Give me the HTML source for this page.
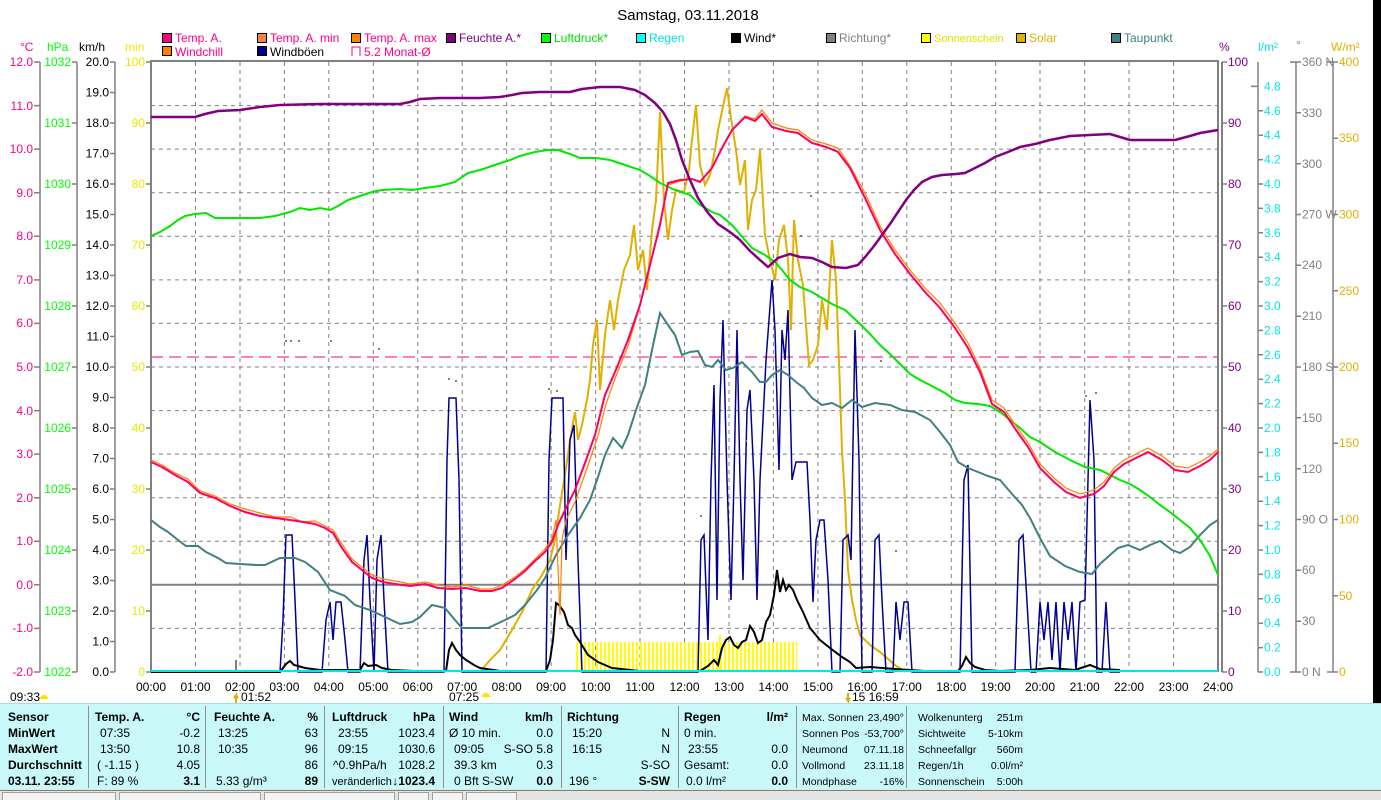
<!DOCTYPE html>
<html><head><meta charset="utf-8"><style>
body{margin:0;width:1381px;height:800px;overflow:hidden;background:#fff;font-family:"Liberation Sans",sans-serif}
svg{display:block;font-size:12px;font-family:"Liberation Sans",sans-serif}
.b{font-weight:bold}
</style></head><body>
<svg width="1381" height="800" viewBox="0 0 1381 800">
<defs>
<pattern id="sun" width="4" height="30" patternUnits="userSpaceOnUse"><rect width="2" height="30" fill="#ffff00"/></pattern>
</defs>
<rect x="1373" y="0" width="8" height="703" fill="#000"/>
<text x="688" y="20" text-anchor="middle" style="font-size:15px">Samstag, 03.11.2018</text>
<g stroke="#000" stroke-width="1">
<rect x="162.5" y="33.5" width="9" height="9" fill="#ff0080"/>
<rect x="257.5" y="33.5" width="9" height="9" fill="#ff8040"/>
<rect x="351.5" y="33.5" width="9" height="9" fill="#ff8000"/>
<rect x="446.5" y="33.5" width="9" height="9" fill="#800080"/>
<rect x="541.5" y="33.5" width="9" height="9" fill="#00ff00"/>
<rect x="636.5" y="33.5" width="9" height="9" fill="#00ffff"/>
<rect x="731.5" y="33.5" width="9" height="9" fill="#000"/>
<rect x="826.5" y="33.5" width="9" height="9" fill="#808080"/>
<rect x="921.5" y="33.5" width="9" height="9" fill="#ffff00"/>
<rect x="1016.5" y="33.5" width="9" height="9" fill="#e0b000"/>
<rect x="1111.5" y="33.5" width="9" height="9" fill="#408080"/>
<rect x="162.5" y="46.5" width="9" height="9" fill="#ff8000"/>
<rect x="257.5" y="46.5" width="9" height="9" fill="#000090"/>
</g>
<path d="M352 56V47h8v9" fill="none" stroke="#ff0080"/>
<g style="font-size:12px">
<text x="175" y="42" fill="#ff0080">Temp. A.</text>
<text x="270" y="42" fill="#ff0080">Temp. A. min</text>
<text x="364" y="42" fill="#ff0080">Temp. A. max</text>
<text x="459" y="42" fill="#800080">Feuchte A.*</text>
<text x="554" y="42" fill="#00e000">Luftdruck*</text>
<text x="649" y="42" fill="#00e0e0">Regen</text>
<text x="744" y="42" fill="#000">Wind*</text>
<text x="839" y="42" fill="#808080">Richtung*</text>
<text x="934" y="42" fill="#e0e000" style="font-size:11px">Sonnenschein</text>
<text x="1029" y="42" fill="#e0b000">Solar</text>
<text x="1124" y="42" fill="#408080">Taupunkt</text>
<text x="175" y="56" fill="#ff0080">Windchill</text>
<text x="270" y="56" fill="#000">Windböen</text>
<text x="364" y="56" fill="#ff0080">5.2 Monat-Ø</text>
<text x="20" y="51" fill="#ff0080">°C</text>
<text x="47" y="51" fill="#00ff00">hPa</text>
<text x="79" y="51" fill="#000">km/h</text>
<text x="125" y="51" fill="#e8e800">min</text>
<text x="1219" y="51" fill="#800080">%</text>
<text x="1258" y="51" fill="#00e0e0">l/m²</text>
<text x="1296" y="49" fill="#808080">°</text>
<text x="1331" y="51" fill="#e0b000">W/m²</text>
</g>
<g stroke="#808080" stroke-dasharray="4,4" stroke-width="1">
<path d="M195.5 62V672M240 62V672M284.4 62V672M328.8 62V672M373.3 62V672M417.8 62V672M462.2 62V672M506.7 62V672M551.1 62V672M595.6 62V672M640 62V672M684.5 62V672M729 62V672M773.4 62V672M817.9 62V672M862.3 62V672M906.8 62V672M951.3 62V672M995.7 62V672M1040 62V672M1084.7 62V672M1129 62V672M1173.6 62V672"/>
<path d="M151 105.6H1218M151 149.1H1218M151 192.7H1218M151 236.3H1218M151 279.9H1218M151 323.4H1218M151 367H1218M151 410.6H1218M151 454.1H1218M151 497.7H1218M151 541.3H1218M151 628.4H1218"/>
</g>
<path d="M151 584.8H1218" stroke="#808080" stroke-width="2"/>
<path d="M151 357H1218" stroke="#ff0080" stroke-dasharray="12,6"/>
<g stroke="#808080" stroke-width="2" fill="none">
<path d="M151 672V61H1218V672"/>
<path d="M1222 62V672"/>
</g>
<g stroke="#808080" stroke-width="1.5" fill="none">
<path d="M40 62V672M77 62V672M115 62V672M1258 62V672M1296 62V672M1333 62V672"/>
<path d="M34 62h6M34 105.6h6M34 149.1h6M34 192.7h6M34 236.3h6M34 279.9h6M34 323.4h6M34 367h6M34 410.6h6M34 454.1h6M34 497.7h6M34 541.3h6M34 584.8h6M34 628.4h6M34 672h6"/>
<path d="M72 62h5M72 123h5M72 184h5M72 245h5M72 306h5M72 367h5M72 428h5M72 489h5M72 550h5M72 611h5M72 672h5"/>
<path d="M110 62h5M110 92.5h5M110 123h5M110 153.5h5M110 184h5M110 214.5h5M110 245h5M110 275.5h5M110 306h5M110 336.5h5M110 367h5M110 397.5h5M110 428h5M110 458.5h5M110 489h5M110 519.5h5M110 550h5M110 580.5h5M110 611h5M110 641.5h5M110 672h5"/>
<path d="M146 62h5M146 123h5M146 184h5M146 245h5M146 306h5M146 367h5M146 428h5M146 489h5M146 550h5M146 611h5M146 672h5"/>
<path d="M1222 62h5M1222 123h5M1222 184h5M1222 245h5M1222 306h5M1222 367h5M1222 428h5M1222 489h5M1222 550h5M1222 611h5M1222 672h5"/>
<path d="M1251 86.4h7M1258 110.8h5M1258 135.2h5M1258 159.6h5M1258 184h5M1258 208.4h5M1258 232.8h5M1258 257.2h5M1258 281.6h5M1258 306h5M1258 330.4h5M1258 354.8h5M1258 379.2h5M1258 403.6h5M1258 428h5M1258 452.4h5M1258 476.8h5M1258 501.2h5M1258 525.6h5M1258 550h5M1258 574.4h5M1258 598.8h5M1258 623.2h5M1258 647.6h5M1258 672h5"/>
<path d="M1290 62h11M1296 112.8h5M1296 163.7h5M1296 214.5h5M1296 265.3h5M1296 316.2h5M1296 367h5M1296 417.8h5M1296 468.7h5M1296 519.5h5M1296 570.3h5M1296 621.2h5M1290 672h11"/>
<path d="M1327 62h11M1333 138.25h5M1333 214.5h5M1333 290.75h5M1333 367h5M1333 443.25h5M1333 519.5h5M1333 595.75h5M1327 672h11"/>
</g>
<g fill="#ff0080" text-anchor="end">
<text x="33" y="66">12.0</text><text x="33" y="110">11.0</text><text x="33" y="153">10.0</text><text x="33" y="197">9.0</text><text x="33" y="240">8.0</text><text x="33" y="284">7.0</text><text x="33" y="327">6.0</text><text x="33" y="371">5.0</text><text x="33" y="415">4.0</text><text x="33" y="458">3.0</text><text x="33" y="502">2.0</text><text x="33" y="545">1.0</text><text x="33" y="589">0.0</text><text x="33" y="632">-1.0</text><text x="33" y="676">-2.0</text>
</g>
<g fill="#00ff00" text-anchor="end">
<text x="71" y="66">1032</text><text x="71" y="127">1031</text><text x="71" y="188">1030</text><text x="71" y="249">1029</text><text x="71" y="310">1028</text><text x="71" y="371">1027</text><text x="71" y="432">1026</text><text x="71" y="493">1025</text><text x="71" y="554">1024</text><text x="71" y="615">1023</text><text x="71" y="676">1022</text>
</g>
<g fill="#000" text-anchor="end">
<text x="109" y="66">20.0</text><text x="109" y="96.5">19.0</text><text x="109" y="127">18.0</text><text x="109" y="157.5">17.0</text><text x="109" y="188">16.0</text><text x="109" y="218.5">15.0</text><text x="109" y="249">14.0</text><text x="109" y="279.5">13.0</text><text x="109" y="310">12.0</text><text x="109" y="340.5">11.0</text><text x="109" y="371">10.0</text><text x="109" y="401.5">9.0</text><text x="109" y="432">8.0</text><text x="109" y="462.5">7.0</text><text x="109" y="493">6.0</text><text x="109" y="523.5">5.0</text><text x="109" y="554">4.0</text><text x="109" y="584.5">3.0</text><text x="109" y="615">2.0</text><text x="109" y="645.5">1.0</text><text x="109" y="676">0.0</text>
</g>
<g fill="#e8e800" text-anchor="end">
<text x="145" y="66">100</text><text x="145" y="127">90</text><text x="145" y="188">80</text><text x="145" y="249">70</text><text x="145" y="310">60</text><text x="145" y="371">50</text><text x="145" y="432">40</text><text x="145" y="493">30</text><text x="145" y="554">20</text><text x="145" y="615">10</text><text x="145" y="676">0</text>
</g>
<g fill="#800080">
<text x="1228" y="66">100</text><text x="1228" y="127">90</text><text x="1228" y="188">80</text><text x="1228" y="249">70</text><text x="1228" y="310">60</text><text x="1228" y="371">50</text><text x="1228" y="432">40</text><text x="1228" y="493">30</text><text x="1228" y="554">20</text><text x="1228" y="615">10</text><text x="1228" y="676">0</text>
</g>
<g fill="#00e8e8">
<text x="1264" y="90.4">4.8</text><text x="1264" y="114.8">4.6</text><text x="1264" y="139.2">4.4</text><text x="1264" y="163.6">4.2</text><text x="1264" y="188">4.0</text><text x="1264" y="212.4">3.8</text><text x="1264" y="236.8">3.6</text><text x="1264" y="261.2">3.4</text><text x="1264" y="285.6">3.2</text><text x="1264" y="310">3.0</text><text x="1264" y="334.4">2.8</text><text x="1264" y="358.8">2.6</text><text x="1264" y="383.2">2.4</text><text x="1264" y="407.6">2.2</text><text x="1264" y="432">2.0</text><text x="1264" y="456.4">1.8</text><text x="1264" y="480.8">1.6</text><text x="1264" y="505.2">1.4</text><text x="1264" y="529.6">1.2</text><text x="1264" y="554">1.0</text><text x="1264" y="578.4">0.8</text><text x="1264" y="602.8">0.6</text><text x="1264" y="627.2">0.4</text><text x="1264" y="651.6">0.2</text><text x="1264" y="676">0.0</text>
</g>
<g fill="#808080">
<text x="1302" y="66">360 N</text><text x="1302" y="117">330</text><text x="1302" y="168">300</text><text x="1302" y="218.5">270 W</text><text x="1302" y="269">240</text><text x="1302" y="320">210</text><text x="1302" y="371">180 S</text><text x="1302" y="422">150</text><text x="1302" y="473">120</text><text x="1302" y="523.5">90 O</text><text x="1302" y="574">60</text><text x="1302" y="625">30</text><text x="1302" y="676">0 N</text>
</g>
<g fill="#e0b000">
<text x="1339" y="66">400</text><text x="1339" y="142">350</text><text x="1339" y="218.5">300</text><text x="1339" y="295">250</text><text x="1339" y="371">200</text><text x="1339" y="447">150</text><text x="1339" y="523.5">100</text><text x="1339" y="600">50</text><text x="1339" y="676">0</text>
</g>
<g text-anchor="middle" fill="#000">
<text x="151" y="691">00:00</text><text x="195.5" y="691">01:00</text><text x="240" y="691">02:00</text><text x="284.4" y="691">03:00</text><text x="328.8" y="691">04:00</text><text x="373.3" y="691">05:00</text><text x="417.8" y="691">06:00</text><text x="462.2" y="691">07:00</text><text x="506.7" y="691">08:00</text><text x="551.1" y="691">09:00</text><text x="595.6" y="691">10:00</text><text x="640" y="691">11:00</text><text x="684.5" y="691">12:00</text><text x="729" y="691">13:00</text><text x="773.4" y="691">14:00</text><text x="817.9" y="691">15:00</text><text x="862.3" y="691">16:00</text><text x="906.8" y="691">17:00</text><text x="951.3" y="691">18:00</text><text x="995.7" y="691">19:00</text><text x="1040" y="691">20:00</text><text x="1084.7" y="691">21:00</text><text x="1129" y="691">22:00</text><text x="1173.6" y="691">23:00</text><text x="1218" y="691">24:00</text>
</g>
<text x="10" y="701">09:33</text><path d="M40 699a4 4 0 0 1 8 0z" fill="#ffe000"/>
<text x="241" y="701">01:52</text><path d="M236 703v-8l-2 3m2-3l2 3" stroke="#e0b000" fill="none" stroke-width="2"/>
<text x="449" y="701">07:25</text><path d="M482 697a4 4 0 0 1 8 0z" fill="#ffe000"/>
<text x="852" y="701">15  16:59</text><path d="M848 693v8l-2-3m2 3l2-3" stroke="#e0b000" fill="none" stroke-width="2"/>
<path d="M236 660v12" stroke="#808080" stroke-width="2"/>
<rect x="575" y="642" width="222" height="30" fill="url(#sun)"/>
<rect x="719" y="635" width="2" height="37" fill="#ffff00"/>
<polyline fill="none" stroke="#e0b000" stroke-width="2" points="480,672 490,660 500,650 512,630 522,612 532,590 542,575 550,560 555,540 560,505 565,475 570,440 575,412 578,440 582,425 587,400 590,380 593,345 597,320 600,390 605,335 610,300 614,330 618,300 624,270 630,255 634,225 638,270 643,250 647,290 652,230 656,200 660,112 664,200 668,240 672,210 676,190 684,192 689,170 692,140 696,105 700,165 705,185 710,175 715,150 718,130 727,88 731,118 736,150 740,185 745,160 748,230 752,200 756,190 760,150 765,235 770,260 775,280 779,240 784,225 788,260 791,330 794,220 798,260 803,285 809,365 813,360 818,345 822,300 827,330 832,240 836,280 840,390 842,450 845,500 848,570 852,600 856,620 860,635 870,645 880,652 895,665 905,672"/>
<polyline fill="none" stroke="#000090" stroke-width="1.5" points="151,672 280,672 283,620 286,535 292,535 295,600 298,672 322,672 326,620 330,602 333,640 336,602 341,602 345,640 348,672 360,672 364,560 367,535 370,600 374,672 377,560 381,535 384,600 388,672 444,672 447,460 449,398 456,398 459,480 462,672 546,672 549,460 552,398 563,398 566,560 570,440 574,425 578,560 582,672 698,672 701,540 704,535 708,640 711,480 714,385 717,600 720,400 723,320 727,480 731,600 734,480 737,330 740,480 743,580 747,410 750,390 754,480 757,600 760,480 763,420 766,360 769,320 772,280 775,330 779,470 782,330 785,360 788,310 792,480 796,462 807,462 810,520 813,602 816,540 820,520 824,520 828,580 832,672 840,672 843,540 848,535 851,560 855,330 859,460 862,672 872,672 875,540 879,535 882,600 886,672 893,672 896,602 900,640 904,602 908,602 912,672 960,672 964,480 968,465 972,672 1015,672 1019,540 1023,535 1027,602 1031,672 1036,672 1040,602 1044,640 1048,602 1052,660 1056,602 1060,672 1064,602 1068,640 1072,602 1076,672 1080,602 1085,600 1090,400 1094,460 1097,672 1102,672 1106,602 1110,672 1120,672"/>
<polyline fill="none" stroke="#000" stroke-width="2" points="151,672 280,672 286,664 290,661 294,665 298,666 305,668 320,670 360,670 364,663 368,666 376,665 382,668 392,670 415,671 446,671 449,650 452,643 456,650 460,655 466,660 474,665 480,668 500,671 546,671 550,660 553,640 556,603 559,605 564,612 568,625 572,628 575,635 580,642 588,655 598,662 612,668 640,671 700,671 708,666 714,660 718,665 722,648 726,640 730,637 734,645 738,648 742,642 746,640 750,626 754,632 758,643 762,640 766,622 770,615 774,595 777,570 780,592 783,580 786,590 789,585 793,590 797,600 803,612 810,628 820,640 830,648 842,657 850,662 856,668 870,667 895,669 925,671 958,671 962,666 966,657 970,663 975,667 985,670 1000,671 1030,670 1050,668 1075,670 1090,665 1100,669 1120,670"/>
<polyline fill="none" stroke="#408080" stroke-width="2" points="151,520 160,527 168,532 178,540 186,546 198,546 206,552 218,558 226,563 240,564 256,565 265,565 280,558 295,558 305,562 318,572 330,590 345,596 355,605 370,610 385,617 400,624 412,622 420,617 432,605 445,608 455,620 462,628 475,628 488,628 505,620 515,615 525,605 537,590 545,578 556,555 568,535 580,518 590,500 597,480 605,455 613,438 622,448 628,435 636,410 645,385 652,350 660,313 668,325 675,335 682,355 690,352 698,351 705,365 712,367 718,360 726,370 733,368 742,362 752,372 760,382 766,382 772,375 780,370 788,375 796,382 804,388 812,398 822,405 832,403 842,408 852,400 862,407 875,403 890,405 902,410 915,412 930,420 940,432 950,445 958,462 968,468 978,472 988,476 1000,480 1012,494 1022,505 1030,518 1040,538 1050,556 1065,566 1080,572 1092,574 1100,564 1110,555 1118,548 1128,545 1140,550 1150,545 1160,541 1172,550 1180,553 1190,547 1200,535 1210,525 1218,520"/>
<polyline fill="none" stroke="#00e800" stroke-width="2" points="151,236 160,232 170,226 178,220 185,216 195,214 206,213 215,218 230,218 245,218 260,218 275,216 290,212 300,208 310,210 320,208 330,210 338,206 348,200 360,196 372,192 382,190 400,189 412,190 425,188 440,186 455,182 468,173 480,170 495,165 510,160 520,156 535,152 548,150 558,150 570,154 580,158 596,158 610,160 625,165 640,170 650,176 660,183 675,190 690,195 700,205 712,212 720,215 732,225 745,240 752,248 765,255 775,262 782,270 790,280 800,287 812,292 822,298 832,304 845,310 858,322 870,334 880,345 890,354 900,364 910,374 920,380 930,385 945,393 955,400 965,403 978,404 990,406 1000,412 1010,420 1020,428 1030,437 1040,442 1055,452 1070,460 1085,467 1100,470 1110,475 1120,480 1130,484 1140,490 1150,497 1160,505 1170,512 1180,520 1190,528 1200,540 1210,556 1218,575"/>
<polyline fill="none" stroke="#ff8000" stroke-width="1.2" points="151,460 162,465 175,473 188,479 200,491 215,496 230,504 245,509 260,513 275,517 290,517 303,522 315,521 325,526 333,530 342,544 352,559 362,567 372,575 383,579 395,581 410,584 425,582 438,585 452,587 466,585 480,589 492,589 502,585 515,577 525,569 535,559 545,549 552,539 556,520 560,615 562,540 566,520 575,502 585,474 598,436 606,404 616,376 628,346 640,306 650,266 660,222 668,185 680,181 692,179 700,181 712,168 722,148 732,130 745,116 755,119 762,110 772,123 786,128 798,130 812,140 826,144 838,148 850,166 865,193 880,226 895,250 910,270 925,288 940,303 955,323 968,343 980,368 992,400 1004,408 1016,426 1028,443 1040,464 1054,478 1066,488 1080,494 1094,490 1104,482 1114,468 1124,460 1138,453 1148,448 1162,456 1175,466 1188,468 1200,462 1210,456 1218,449"/>
<polyline fill="none" stroke="#ff0060" stroke-width="2" points="151,462 162,467 175,475 188,482 200,493 215,498 230,506 245,512 260,516 275,518 290,520 303,522 315,524 325,528 333,533 342,548 352,562 362,570 372,578 383,582 395,584 410,586 425,584 438,588 452,589 466,588 480,591 492,591 502,588 515,579 525,571 535,561 545,552 552,542 558,525 566,508 575,490 585,463 595,435 605,395 615,372 628,340 640,305 650,265 660,225 668,183 680,180 692,179 700,182 712,168 722,148 732,130 745,117 755,121 762,114 772,127 786,131 798,133 812,143 826,147 838,152 850,168 865,198 880,230 895,254 910,274 925,292 940,308 955,328 968,348 980,372 992,404 1004,412 1016,430 1028,447 1040,468 1054,482 1066,492 1080,498 1094,494 1104,486 1114,472 1124,464 1138,457 1148,452 1162,460 1175,470 1188,472 1200,466 1210,460 1218,452"/>
<polyline fill="none" stroke="#800080" stroke-width="2.5" points="151,117 195,117 205,114 218,111 240,110 260,107 280,105 320,104 360,104 400,104 410,102 420,99 440,98 480,98 500,97 512,95 522,93 540,92 570,92 582,89 600,87 620,87 635,90 645,95 655,103 663,112 670,124 676,140 682,160 690,180 698,198 708,213 718,224 730,232 740,240 750,251 760,260 768,267 778,258 790,254 800,257 812,258 822,262 832,267 846,268 858,265 866,256 874,246 882,235 890,224 898,212 906,200 914,190 922,182 932,177 942,175 956,174 965,173 975,168 985,163 995,157 1008,152 1020,147 1035,144 1050,140 1070,136 1090,135 1110,134 1120,137 1130,140 1150,140 1175,140 1190,136 1200,133 1218,130"/>
<g fill="#808080">
<rect x="285" y="340" width="2" height="2"/><rect x="290" y="340" width="2" height="2"/><rect x="298" y="340" width="2" height="2"/><rect x="330" y="340" width="2" height="2"/><rect x="378" y="348" width="2" height="2"/><rect x="448" y="378" width="2" height="2"/><rect x="455" y="380" width="2" height="2"/><rect x="548" y="388" width="2" height="2"/><rect x="556" y="390" width="2" height="2"/><rect x="700" y="515" width="2" height="2"/><rect x="745" y="440" width="2" height="2"/><rect x="800" y="235" width="2" height="2"/><rect x="810" y="195" width="2" height="2"/><rect x="880" y="360" width="2" height="2"/><rect x="895" y="550" width="2" height="2"/><rect x="1085" y="395" width="2" height="2"/><rect x="1095" y="392" width="2" height="2"/>
</g>
<path d="M151 671H1218" stroke="#00e8e8" stroke-width="2"/>
<rect x="0" y="703" width="1381" height="86" fill="#c8f8f8"/>
<path d="M0 703.5H1381" stroke="#a0e0e0"/>
<g stroke="#909090" stroke-width="1">
<path d="M88.5 706V788M205.5 706V788M324.5 706V788M443.5 706V788M561.5 706V788M678.5 706V788M796.5 706V788M906.5 706V788"/>
</g>
<rect x="0" y="789" width="1381" height="11" fill="#e4e4e4"/>
<path d="M0 790.5H1381" stroke="#808080"/>
<g stroke="#a0a0a0" fill="#f4f4f4"><rect x="2.5" y="792.5" width="113" height="8"/><rect x="119.5" y="792.5" width="141" height="8"/><rect x="264.5" y="792.5" width="130" height="8"/><rect x="398.5" y="792.5" width="30" height="8"/><rect x="432.5" y="792.5" width="30" height="8"/><rect x="466.5" y="792.5" width="50" height="8"/></g>
<g style="font-size:12px">
<text x="8" y="721" class="b">Sensor</text>
<text x="8" y="737" class="b">MinWert</text>
<text x="8" y="753" class="b">MaxWert</text>
<text x="8" y="769" class="b">Durchschnitt</text>
<text x="8" y="785" class="b">03.11. 23:55</text>

<text x="95" y="721" class="b">Temp. A.</text><text x="200" y="721" class="b" text-anchor="end">°C</text>
<text x="100" y="737">07:35</text><text x="200" y="737" text-anchor="end">-0.2</text>
<text x="100" y="753">13:50</text><text x="200" y="753" text-anchor="end">10.8</text>
<text x="97" y="769">( -1.15 )</text><text x="200" y="769" text-anchor="end">4.05</text>
<text x="97" y="785">F: 89 %</text><text x="200" y="785" class="b" text-anchor="end">3.1</text>

<text x="214" y="721" class="b">Feuchte A.</text><text x="318" y="721" class="b" text-anchor="end">%</text>
<text x="218" y="737">13:25</text><text x="318" y="737" text-anchor="end">63</text>
<text x="218" y="753">10:35</text><text x="318" y="753" text-anchor="end">96</text>
<text x="318" y="769" text-anchor="end">86</text>
<text x="216" y="785">5.33 g/m³</text><text x="318" y="785" class="b" text-anchor="end">89</text>

<text x="332" y="721" class="b">Luftdruck</text><text x="435" y="721" class="b" text-anchor="end">hPa</text>
<text x="338" y="737">23:55</text><text x="435" y="737" text-anchor="end">1023.4</text>
<text x="338" y="753">09:15</text><text x="435" y="753" text-anchor="end">1030.6</text>
<text x="333" y="769">^0.9hPa/h</text><text x="435" y="769" text-anchor="end">1028.2</text>
<text x="332" y="785" style="font-size:11px">veränderlich</text><text x="435" y="785" class="b" text-anchor="end">↓1023.4</text>

<text x="449" y="721" class="b">Wind</text><text x="553" y="721" class="b" text-anchor="end">km/h</text>
<text x="449" y="737">Ø 10 min.</text><text x="553" y="737" text-anchor="end">0.0</text>
<text x="454" y="753">09:05</text><text x="553" y="753" text-anchor="end">S-SO 5.8</text>
<text x="454" y="769">39.3 km</text><text x="553" y="769" text-anchor="end">0.3</text>
<text x="454" y="785">0 Bft S-SW</text><text x="553" y="785" class="b" text-anchor="end">0.0</text>

<text x="567" y="721" class="b">Richtung</text>
<text x="572" y="737">15:20</text><text x="670" y="737" text-anchor="end">N</text>
<text x="572" y="753">16:15</text><text x="670" y="753" text-anchor="end">N</text>
<text x="670" y="769" text-anchor="end">S-SO</text>
<text x="569" y="785">196 °</text><text x="670" y="785" class="b" text-anchor="end">S-SW</text>

<text x="684" y="721" class="b">Regen</text><text x="788" y="721" class="b" text-anchor="end">l/m²</text>
<text x="684" y="737">0 min.</text>
<text x="688" y="753">23:55</text><text x="788" y="753" text-anchor="end">0.0</text>
<text x="684" y="769">Gesamt:</text><text x="788" y="769" text-anchor="end">0.0</text>
<text x="686" y="785">0.0 l/m²</text><text x="788" y="785" class="b" text-anchor="end">0.0</text>
</g>
<g style="font-size:10.5px">
<text x="802" y="721">Max. Sonnen</text><text x="904" y="721" text-anchor="end">23,490°</text>
<text x="802" y="737">Sonnen Pos</text><text x="904" y="737" text-anchor="end">-53,700°</text>
<text x="802" y="753">Neumond</text><text x="904" y="753" text-anchor="end">07.11.18</text>
<text x="802" y="769">Vollmond</text><text x="904" y="769" text-anchor="end">23.11.18</text>
<text x="802" y="785">Mondphase</text><text x="904" y="785" text-anchor="end">-16%</text>

<text x="918" y="721">Wolkenunterg</text><text x="1023" y="721" text-anchor="end">251m</text>
<text x="918" y="737">Sichtweite</text><text x="1023" y="737" text-anchor="end">5-10km</text>
<text x="918" y="753">Schneefallgr</text><text x="1023" y="753" text-anchor="end">560m</text>
<text x="918" y="769">Regen/1h</text><text x="1023" y="769" text-anchor="end">0.0l/m²</text>
<text x="918" y="785">Sonnenschein</text><text x="1023" y="785" text-anchor="end">5:00h</text>
</g>
</svg>
</body></html>
